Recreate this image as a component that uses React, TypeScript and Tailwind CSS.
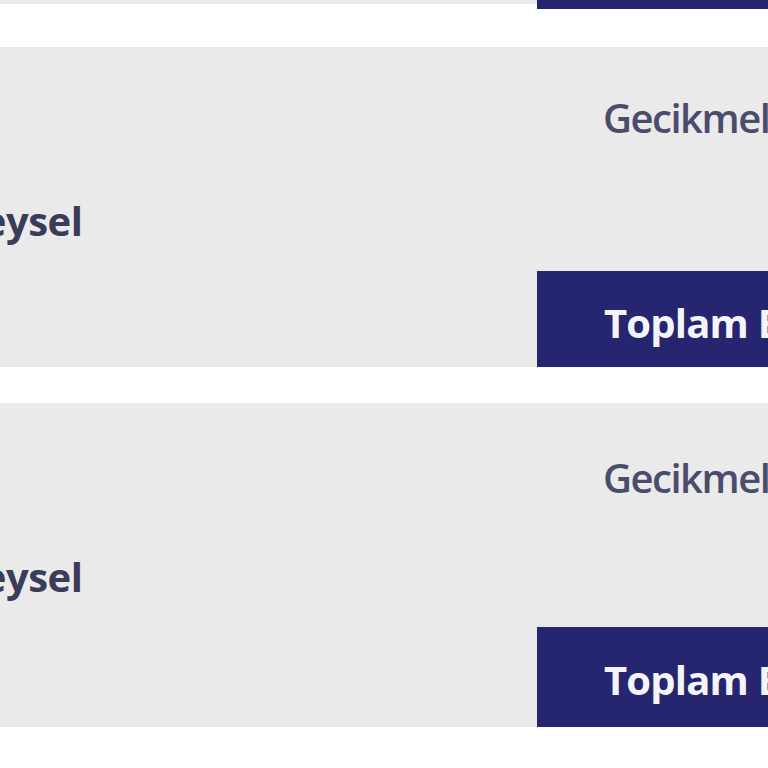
export default function App() {
  const font = { fontFamily: '"Open Sans", "Noto Sans", sans-serif' };
  const Card = ({ h, top, bar, barPad }: { h: string; top: string; bar: string; barPad: string }) => (
    <div className={`flex ${h} w-[1000px] -ml-[100px] bg-[#ebeaea] shrink-0`} style={font}>
      <div className="w-[637px] shrink-0 pl-[27px] pt-[154px]">
        <div className="text-[40px] leading-none font-bold text-[#3a3c58] tracking-[-0.5px]">Bireysel</div>
      </div>
      <div className="flex-1 flex flex-col justify-between">
        <div className={`pl-[66px] ${top} text-[40px] leading-none font-semibold text-[#4a4c6c] tracking-[-1.5px] whitespace-nowrap`}>
          Gecikmeli Ödeme
        </div>
        <div className={`${bar} bg-[#26256f] flex items-center pl-[67px] ${barPad}`}>
          <span className="text-[40px] leading-none font-bold text-[#f4f4fa] tracking-[-0.8px] whitespace-nowrap">Toplam Borç</span>
        </div>
      </div>
    </div>
  );
  return (
    <div className="w-[768px] h-[768px] overflow-hidden bg-white flex flex-col">
      <div className="flex h-[9px] w-[1000px] -ml-[100px] shrink-0">
        <div className="w-[637px] h-[4px] bg-[#ebeaea]" />
        <div className="flex-1 bg-[#25246e]" />
      </div>
      <div className="h-[38px] shrink-0" />
      <Card h="h-[320px]" top="pt-[51px]" bar="h-[96px]" barPad="pt-[8px]" />
      <div className="h-[36px] shrink-0" />
      <Card h="h-[324px]" top="pt-[55px]" bar="h-[100px]" barPad="pt-[5px]" />
    </div>
  );
}
